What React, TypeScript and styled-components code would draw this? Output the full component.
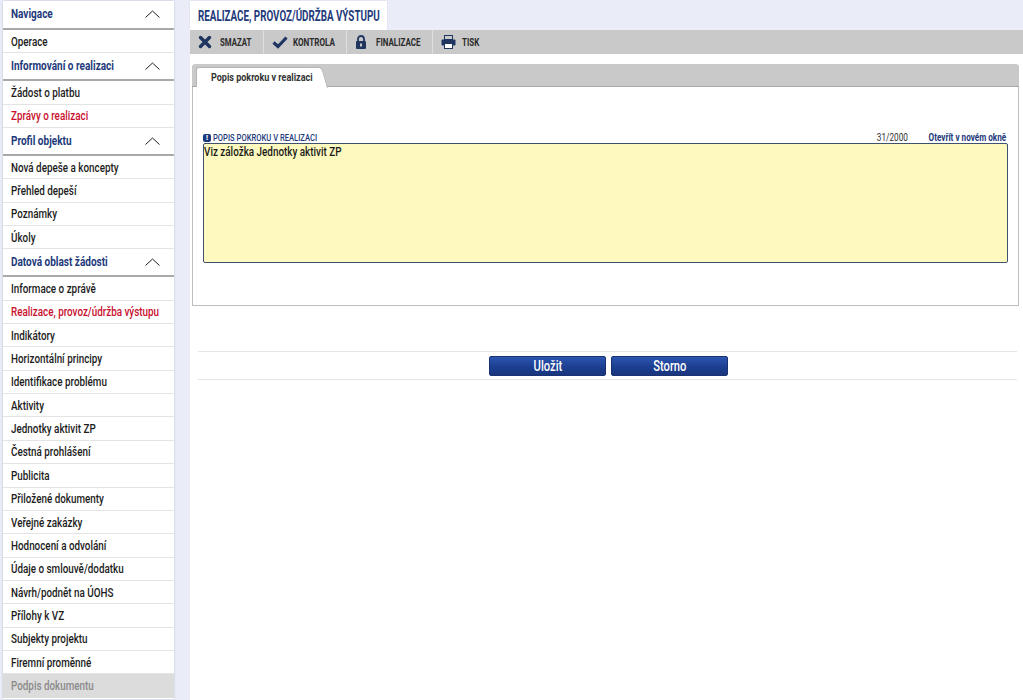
import React from "react";
import styled, { createGlobalStyle } from "styled-components";

const Global = createGlobalStyle`
  html, body { margin: 0; padding: 0; height: 100%; background: #fff; }
  body { font-family: "Roboto", "Liberation Sans", sans-serif; overflow: hidden; }
  * { box-sizing: border-box; }
`;

/* The reference uses a condensed face that is not installed: narrow real text horizontally. */
const Narrow = styled.span<{ $x: number; $origin?: string }>`
  display: inline-block; white-space: nowrap; flex: none;
  transform: scaleX(${(p) => p.$x});
  transform-origin: ${(p) => p.$origin ?? "left"} center;
`;

const Page = styled.div`
  display: flex; width: 1023px; height: 700px; overflow: hidden; background: #eaedf8;
`;
const Sidebar = styled.nav`
  width: 171px; margin: 1px 0 0 3px; height: 698px; padding-top: 1px; background: #fff;
  box-shadow: 0 0 2px #b9bdcc; flex: none; display: flex; flex-direction: column;
`;
const SectionHead = styled.div`
  height: 28px; flex: none; display: flex; align-items: flex-start; justify-content: space-between;
  padding: 5px 14px 0 8px; border-bottom: 2px solid #a9a9a9;
  font-size: 13px; font-weight: 700; color: #233a7b; line-height: 15px;
  &:first-child { padding-top: 4px; }
`;
const Item = styled.div<{ $tone?: "active" | "disabled" }>`
  height: 23.35px; flex: none; padding: 0 8px; display: flex; align-items: center;
  font-size: 13px; font-weight: 500; overflow: hidden;
  border-bottom: 1px solid ${(p) => (p.$tone === "disabled" ? "#dcdcdc" : "#e4e4e4")};
  color: ${(p) => (p.$tone === "active" ? "#c8102e" : p.$tone === "disabled" ? "#8a8a8a" : "#1c1c1c")};
  background: ${(p) => (p.$tone === "disabled" ? "#dcdcdc" : "#fff")};
`;
const Main = styled.main`
  margin-left: 16px; width: 833px; display: flex; flex-direction: column;
`;
const TitleRow = styled.div`
  height: 30px; flex: none; display: flex; padding-top: 1px;
`;
const TitleTab = styled.div`
  width: 197px; height: 29px; background: #fff; color: #233a7b; font-size: 14px; font-weight: 700;
  display: flex; align-items: center; padding-left: 8px; overflow: hidden;
  box-shadow: 0 0 1px #c5c9d8;
`;
const Content = styled.div`
  flex: 1; background: #fff; display: flex; flex-direction: column;
`;
const Toolbar = styled.div`
  height: 24px; flex: none; background: #c9c9c9; display: flex; align-items: stretch;
`;
const ToolButton = styled.div<{ $w: number; $gap: number }>`
  width: ${(p) => p.$w}px; flex: none; display: flex; align-items: center; gap: ${(p) => p.$gap}px; padding-left: 8px;
  border-right: 1px solid #dedede; font-size: 10px; font-weight: 700; color: #2b2b2b; overflow: hidden;
  &:last-child { border-right: none; }
`;
const Panel = styled.section`
  margin: 10px 0 0 2px; width: 827px; height: 242px; border: 1px solid #bdbdbd; border-top: none;
  border-radius: 4px 4px 0 0; display: flex; flex-direction: column;
`;
const TabStrip = styled.div`
  height: 23px; flex: none; background: #c9c9c9; border-bottom: 1px solid #a8a8a8; margin: 0 -1px;
  border-radius: 4px 4px 0 0; padding: 3px 0 0 4px; display: flex;
`;
const Tab = styled.div`
  position: relative; width: 123px; height: 20px; background: #fff; border-radius: 3px 0 0 0;
  border: 1px solid #b5b5b5; border-bottom: none; border-right: none;
  font-size: 11px; font-weight: 700; color: #333; padding-left: 14px;
  display: flex; align-items: center;
  &::after {
    content: ""; position: absolute; top: -1px; right: -6px; width: 12px; height: 20px;
    background: #fff; border-right: 1px solid #b5b5b5; border-top: 1px solid #b5b5b5;
    border-radius: 0 4px 0 0; transform: skewX(16deg); z-index: 0;
  }
  & > span { position: relative; z-index: 1; }
`;
const PanelBody = styled.div`
  padding: 46px 10px 0 10px; display: flex; flex-direction: column;
`;
const LabelRow = styled.div`
  height: 10px; display: flex; align-items: center; font-size: 9.5px; line-height: 10px; padding-right: 2px;
`;
const FieldLabel = styled.span`
  display: flex; align-items: center; gap: 2px; color: #233a7b; font-weight: 500;
`;
const InfoBadge = styled.span`
  width: 8px; height: 8px; border-radius: 2px; background: #1d3a7c; color: #fff; font-size: 7px; font-weight: 900;
  display: flex; align-items: center; justify-content: center; line-height: 8px;
`;
const Counter = styled.span`
  margin-left: auto; color: #333; font-size: 10px;
`;
const LinkText = styled.span`
  margin-left: 3px; color: #233a7b; font-size: 10px; font-weight: 700;
`;
const TextBox = styled.div`
  height: 120px; background: #fefabf; border: 1px solid #3e5270; border-radius: 2px;
  padding: 0; font-size: 13px; font-weight: 500; line-height: 15px; color: #1a1a1a;
`;
const ButtonBar = styled.div`
  margin: 45px 0 0 8px; width: 819px; height: 29px; border-top: 1px solid #e6e6e6; border-bottom: 1px solid #e6e6e6;
  display: flex; align-items: center; justify-content: center; gap: 5px; padding-left: 2px;
`;
const ActionButton = styled.div`
  width: 117px; height: 20px; border-radius: 2px; background: linear-gradient(#2c56b0, #1b3d8e 60%, #19357c);
  border: 1px solid #1a3272; color: #fff; font-size: 14px; font-weight: 500;
  display: flex; align-items: center; justify-content: center;
`;

const Chevron = () => (
  <svg width="15" height="8" viewBox="0 0 15 8" style={{ marginTop: 4, flex: "none" }}>
    <path d="M0.5 7.5 L7.5 1 L14.5 7.5" fill="none" stroke="#222" strokeWidth="1" />
  </svg>
);
const XIcon = () => (
  <svg width="14" height="14" viewBox="0 0 14 14"><path d="M2.5 2.5 L11.5 11.5 M11.5 2.5 L2.5 11.5" stroke="#1f3560" strokeWidth="3.4" strokeLinecap="round" /></svg>
);
const CheckIcon = () => (
  <svg width="16" height="14" viewBox="0 0 16 14"><path d="M1.5 7.5 L6 11.5 L14.5 2.5" fill="none" stroke="#1f3560" strokeWidth="3.2" /></svg>
);
const LockIcon = () => (
  <svg width="12" height="14" viewBox="0 0 12 14"><rect x="1" y="6" width="10" height="8" rx="1" fill="#1f3560" /><path d="M3 6.5 V4 a3 3 0 0 1 6 0 V6.5" fill="none" stroke="#1f3560" strokeWidth="1.8" /><rect x="5" y="8.5" width="2" height="3" fill="#c9c9c9" /></svg>
);
const PrinterIcon = () => (
  <svg width="15" height="14" viewBox="0 0 15 14"><rect x="3.5" y="0.5" width="8" height="4" fill="#c9c9c9" stroke="#1f3560" /><rect x="0.5" y="4.5" width="14" height="6" rx="1" fill="#1f3560" /><rect x="3.5" y="8.5" width="8" height="5" fill="#fff" stroke="#1f3560" /></svg>
);

type Row = { t: string; tone?: "active" | "disabled" };
const sections: { head: string; items: Row[] }[] = [
  { head: "Navigace", items: [{ t: "Operace" }] },
  { head: "Informování o realizaci", items: [{ t: "Žádost o platbu" }, { t: "Zprávy o realizaci", tone: "active" }] },
  { head: "Profil objektu", items: [{ t: "Nová depeše a koncepty" }, { t: "Přehled depeší" }, { t: "Poznámky" }, { t: "Úkoly" }] },
  {
    head: "Datová oblast žádosti",
    items: [
      { t: "Informace o zprávě" },
      { t: "Realizace, provoz/údržba výstupu", tone: "active" },
      { t: "Indikátory" },
      { t: "Horizontální principy" },
      { t: "Identifikace problému" },
      { t: "Aktivity" },
      { t: "Jednotky aktivit ZP" },
      { t: "Čestná prohlášení" },
      { t: "Publicita" },
      { t: "Přiložené dokumenty" },
      { t: "Veřejné zakázky" },
      { t: "Hodnocení a odvolání" },
      { t: "Údaje o smlouvě/dodatku" },
      { t: "Návrh/podnět na ÚOHS" },
      { t: "Přílohy k VZ" },
      { t: "Subjekty projektu" },
      { t: "Firemní proměnné" },
      { t: "Podpis dokumentu", tone: "disabled" },
    ],
  },
];

export default function App() {
  return (
    <>
      <Global />
      <Page>
        <Sidebar>
          {sections.map((s) => (
            <React.Fragment key={s.head}>
              <SectionHead>
                <Narrow $x={0.77}>{s.head}</Narrow>
                <Chevron />
              </SectionHead>
              {s.items.map((i) => (
                <Item key={i.t} $tone={i.tone}><Narrow $x={0.758}>{i.t}</Narrow></Item>
              ))}
            </React.Fragment>
          ))}
        </Sidebar>
        <Main>
          <TitleRow>
            <TitleTab><Narrow $x={0.7}>REALIZACE, PROVOZ/ÚDRŽBA VÝSTUPU</Narrow></TitleTab>
          </TitleRow>
          <Content>
            <Toolbar>
              <ToolButton $w={74} $gap={8}><XIcon /><Narrow $x={0.78}>SMAZAT</Narrow></ToolButton>
              <ToolButton $w={83} $gap={5}><CheckIcon /><Narrow $x={0.81}>KONTROLA</Narrow></ToolButton>
              <ToolButton $w={86} $gap={9}><LockIcon /><Narrow $x={0.8}>FINALIZACE</Narrow></ToolButton>
              <ToolButton $w={70} $gap={6}><PrinterIcon /><Narrow $x={0.8}>TISK</Narrow></ToolButton>
            </Toolbar>
            <Panel>
              <TabStrip>
                <Tab><Narrow $x={0.82}>Popis pokroku v realizaci</Narrow></Tab>
              </TabStrip>
              <PanelBody>
                <LabelRow>
                  <FieldLabel><InfoBadge>!</InfoBadge><Narrow $x={0.8}>POPIS POKROKU V REALIZACI</Narrow></FieldLabel>
                  <Counter><Narrow $x={0.82} $origin="right">31/2000</Narrow></Counter>
                  <LinkText><Narrow $x={0.816} $origin="right">Otevřít v novém okně</Narrow></LinkText>
                </LabelRow>
                <TextBox><Narrow $x={0.76}>Viz záložka Jednotky aktivit ZP</Narrow></TextBox>
              </PanelBody>
            </Panel>
            <ButtonBar>
              <ActionButton><Narrow $x={0.8} $origin="center">Uložit</Narrow></ActionButton>
              <ActionButton><Narrow $x={0.8} $origin="center">Storno</Narrow></ActionButton>
            </ButtonBar>
          </Content>
        </Main>
      </Page>
    </>
  );
}
